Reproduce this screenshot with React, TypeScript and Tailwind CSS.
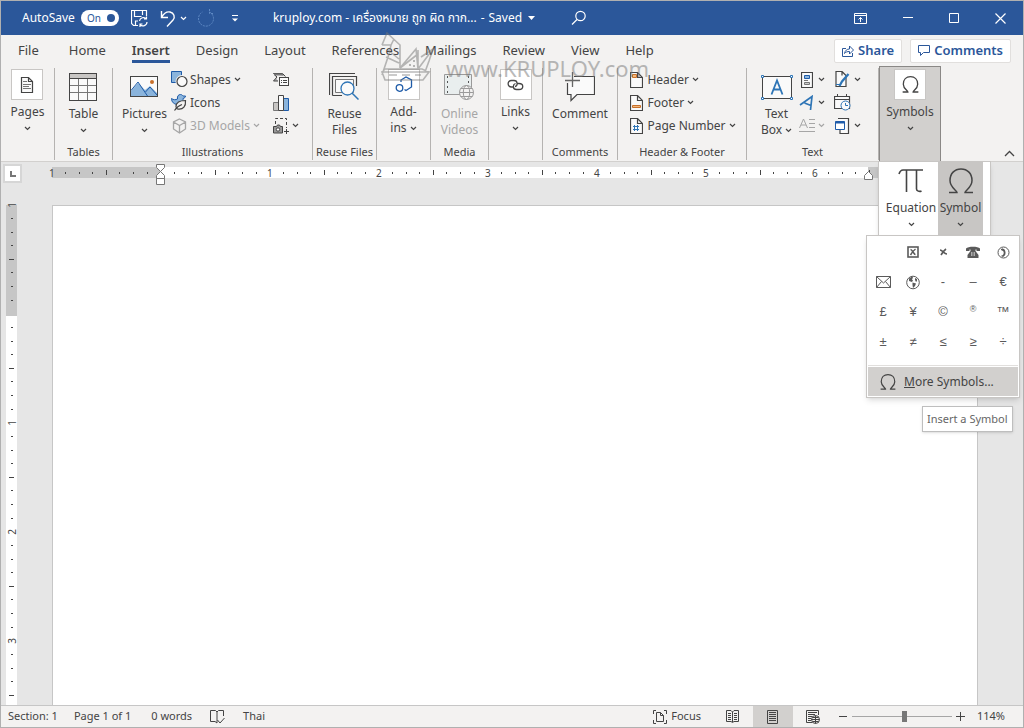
import type { ReactNode } from "react";

const tabs = ["File", "Home", "Insert", "Design", "Layout", "References", "Mailings", "Review", "View", "Help"];

const symbols: { name: string; glyph: ReactNode }[] = [
  { name: "Blank", glyph: "" },
  { name: "Boxed cross", glyph: <BoxedCrossIcon /> },
  { name: "Small cross", glyph: <SmallCrossIcon /> },
  { name: "Telephone", glyph: <PhoneIcon /> },
  { name: "Telephone location", glyph: <HandsetIcon /> },
  { name: "Envelope", glyph: <EnvelopeIcon /> },
  { name: "Globe", glyph: <GlobeIcon /> },
  { name: "Hyphen", glyph: "-" },
  { name: "Dash", glyph: "–" },
  { name: "Euro", glyph: "€" },
  { name: "Pound", glyph: "£" },
  { name: "Yen", glyph: "¥" },
  { name: "Copyright", glyph: "©" },
  { name: "Registered", glyph: <span className="mb-1 text-[9px]">®</span> },
  { name: "Trademark", glyph: "™" },
  { name: "Plus minus", glyph: "±" },
  { name: "Not equal", glyph: "≠" },
  { name: "Less or equal", glyph: "≤" },
  { name: "Greater or equal", glyph: "≥" },
  { name: "Division", glyph: "÷" },
];

function Svg({ w, h, children, className = "" }: { w: number; h: number; children: ReactNode; className?: string }) {
  return (
    <svg
      width={w}
      height={h}
      viewBox={`0 0 ${w} ${h}`}
      fill="none"
      stroke="currentColor"
      strokeWidth="1"
      className={`shrink-0 ${className}`}
      aria-hidden="true"
    >
      {children}
    </svg>
  );
}

function Chevron() {
  return (
    <Svg w={7} h={5}>
      <path d="M1 1l2.5 2.5L6 1" strokeWidth="1.2" />
    </Svg>
  );
}

/* symbol menu glyphs */

function BoxedCrossIcon() {
  return (
    <Svg w={12} h={12}>
      <rect x="1" y="1" width="10" height="10" strokeWidth="1.6" />
      <path d="M3.5 3.5c2 0 3 5 5 5M8.5 3c-1.5 1-3.5 3.5-5 6" strokeWidth="1.5" />
    </Svg>
  );
}

function SmallCrossIcon() {
  return (
    <Svg w={9} h={8}>
      <path d="M1 2c2.5 0 4 4 7 4M7 1C5 2.5 3.5 4.5 2 7" strokeWidth="1.6" />
    </Svg>
  );
}

function PhoneIcon() {
  return (
    <Svg w={14} h={12}>
      <path
        d="M0 4V2.5C2 .3 12 .3 14 2.5V5h-3.5V3.5h-1V5l3 4v3H1.5V9l3-4V3.5h-1V5H0z"
        fill="currentColor"
        stroke="none"
      />
      <path d="M5 7h4M5 9h4" stroke="#fff" strokeDasharray="1 .5" />
    </Svg>
  );
}

function HandsetIcon() {
  return (
    <Svg w={13} h={13}>
      <circle cx="6.5" cy="6.5" r="5.5" />
      <path d="M5 3.5c3 0 3.5 5 1 6.5" strokeWidth="1.8" />
      <path d="M4 3.5h2M4.5 10h2" strokeWidth="1.5" />
    </Svg>
  );
}

function EnvelopeIcon() {
  return (
    <Svg w={15} h={12}>
      <path d="M.5.5h14v11H.5zM.5.5L7.5 7l7-6.5M.5 11.5l5-6M14.5 11.5l-5-6" />
    </Svg>
  );
}

function GlobeIcon() {
  return (
    <Svg w={14} h={15}>
      <circle cx="7" cy="7.5" r="6.3" />
      <path d="M3 3.500l3-2 1 1-1 2 1 1-1 1.500-3-1zM9 3l2 1v2l-1 1-1-2zM6.500 7.500l3.500 1-1 2.500-2 2-.5-3z" fill="currentColor" stroke="none" />
    </Svg>
  );
}

/* ribbon icons */

function PageIcon() {
  return (
    <Svg w={14} h={18}>
      <path d="M1.500 1.500h7l4 4v11h-11zM8.500 1.500v4h4" fill="#fafafa" strokeWidth="1.2" />
      <path d="M3 5.500h4M3 8.500h8M3 10.500h6M3 12.500h8" stroke="#777" />
    </Svg>
  );
}

function TableIcon() {
  return (
    <Svg w={28} h={28}>
      <rect x=".5" y=".5" width="27" height="27" fill="#fafafa" />
      <path d="M1 1h26v4H1z" fill="#c8c6c4" stroke="none" />
      <path d="M1 12.500h26M1 19.500h26M9.500 5v22M18.500 5v22" stroke="#777" />
      <path d="M.5.5h27v27H.5zM.5 5.500h27" />
    </Svg>
  );
}

function PicturesIcon() {
  return (
    <Svg w={28} h={22}>
      <rect x=".5" y=".5" width="27" height="20" fill="#fafafa" />
      <path d="M1 15l7-8 7 7 5-4 7 7v4H1z" fill="#8ab4dc" stroke="none" />
      <path d="M1 14.500l7-8.500 9.500 14M15.500 16l4.500-5 7 8" stroke="#1e5ba8" />
      <circle cx="22" cy="6" r="2" fill="#c8702a" stroke="none" />
      <path d="M.5.5h27v20H.5z" />
    </Svg>
  );
}

function ShapesIcon() {
  return (
    <Svg w={17} h={17}>
      <path d="M.5.5h10v11H.5z" fill="#8ab4dc" stroke="#1e5ba8" />
      <circle cx="11" cy="10.500" r="5" fill="#fafafa" stroke="#f3f2f1" strokeWidth="3" />
      <circle cx="11" cy="10.500" r="5" fill="#fafafa" strokeWidth="1.2" />
    </Svg>
  );
}

function DuckIcon() {
  return (
    <Svg w={17} h={17}>
      <path d="M.5 4.500c2 1.500 4 1.500 6 .5C6 2 7.500.5 9.500.5c1.500 0 2 1 2.500 1.500h2.500c0 1.500-1 2-2.500 2.500.5 3-1 6-5 6C3 10.500.5 8 .5 4.500z" fill="#8ab4dc" stroke="#1e5ba8" />
      <path d="M14.500 6.500c-6 0-9.500 2-9.500 6 0 1 .5 2 1.500 2.500 6 1 8.500-3 8-8.500z" fill="#f3f2f1" strokeWidth="1.2" />
      <path d="M3.500 16.500c2-3 4.500-5 7.500-6" strokeWidth="1.2" />
    </Svg>
  );
}

function CubeIcon() {
  return (
    <Svg w={15} h={16}>
      <path d="M7.500 1l6 3v7l-6 4-6-4V4zM1.500 4l6 3.500 6-3.500M7.500 7.500V15" strokeWidth="1.3" />
    </Svg>
  );
}

function SmartArtIcon() {
  return (
    <Svg w={16} h={13}>
      <path d="M.5.5h9l3 3M.5.5L4 4 .5 8H5" fill="#b5b5b5" />
      <path d="M1 1.500h9" stroke="#777" strokeWidth="2" />
      <rect x="6.500" y="4.500" width="9" height="8" fill="#fafafa" />
      <path d="M8 7.500h1M10 7.500h4M8 9.500h1M10 9.500h4" />
    </Svg>
  );
}

function ChartIcon() {
  return (
    <Svg w={16} h={16}>
      <path d="M.5 7.500h5v8h-5z" fill="#c8c6c4" stroke="#777" />
      <path d="M10.500 3.500h5v12h-5z" fill="#8ab4dc" stroke="#1e5ba8" />
      <path d="M5.500.5h5v15h-5z" fill="#fafafa" />
    </Svg>
  );
}

function ScreenshotIcon() {
  return (
    <Svg w={16} h={16}>
      <path d="M2.500 6V.5h11V10" strokeDasharray="3 2" />
      <path d="M.5 8.500h3l1-1.500h2l1 1.500h2v6.500h-9z" fill="#999" />
      <circle cx="5" cy="11.500" r="1.7" fill="#fff" />
      <path d="M11 13.500h5M13.500 11v5" />
    </Svg>
  );
}

function ReuseIcon() {
  return (
    <Svg w={30} h={28}>
      <path d="M.5 22V.5H26M3.500 22.500v-19h24V13M3.500 22.500H13" strokeWidth="1.2" />
      <path d="M6.500 6.500h18v13h-18z" fill="#fafafa" stroke="#777" />
      <circle cx="18.500" cy="15.500" r="6.500" fill="#fafafa" stroke="#2e75b6" strokeWidth="1.3" />
      <path d="M23 20l6.500 6.500" stroke="#2e75b6" strokeWidth="1.5" />
    </Svg>
  );
}

function AddinsIcon() {
  return (
    <Svg w={18} h={17} className="text-[#1e5ba8]">
      <path d="M6 6V4l5-3 5.500 3v7L11 14.500 9.500 13.500" strokeWidth="1.3" />
      <circle cx="4.500" cy="12" r="3.300" strokeWidth="1.3" />
    </Svg>
  );
}

function VideoIcon() {
  return (
    <Svg w={30} h={26} className="text-[#9a9a9a]">
      <path d="M.5.5h27v20H.5z" fill="#e9eeee" />
      <path d="M3.500 2v18M24.500 2v10" stroke="#555" strokeDasharray="2 3" />
      <circle cx="22.500" cy="18.500" r="7" fill="#f3f2f1" />
      <ellipse cx="22.500" cy="18.500" rx="3.200" ry="7" />
      <path d="M15.500 18.500h14M16.500 14.500h12M16.500 22.500h12" />
    </Svg>
  );
}

function LinkIcon() {
  return (
    <Svg w={17} h={12}>
      <path
        d="M7 8H4.500C0 8 0 1.500 4.500 1.500h2.500c4 0 4 5.500 1 6M9.500 4.500H12c5 0 5 6 0 6H9.500c-4 0-4-5-1-6"
        strokeWidth="1.3"
      />
    </Svg>
  );
}

function CommentIcon() {
  return (
    <Svg w={30} h={30}>
      <path d="M2.500 4.500h27v18H12l-6 6v-6H2.500z" fill="#fafafa" strokeWidth="1.2" />
      <path d="M0 0h9v11H0z" fill="#f3f2f1" stroke="none" />
      <path d="M7.500 0v15M0 8.500h15" stroke="#666" strokeWidth="1.3" />
    </Svg>
  );
}

function DocIcon({ kind }: { kind: "header" | "footer" | "number" }) {
  return (
    <Svg w={13} h={16}>
      <path d="M.5.5h7l5 5v10H.5zM7.500.5v5h5" fill="#fafafa" strokeWidth="1.2" />
      {kind === "header" && <path d="M2.500 2.500h4v3h-4z" fill="#f4b77c" stroke="#c8702a" />}
      {kind === "footer" && <path d="M2.500 10.500h8v2h-8z" fill="#f4b77c" stroke="#c8702a" />}
      {kind === "number" && <path d="M4.500 7v6M7.500 7v6M3 8.500h6M3 11.500h6" stroke="#2e75b6" />}
    </Svg>
  );
}

function TextBoxIcon() {
  return (
    <Svg w={32} h={27}>
      <path d="M1.500 2.500h29v22h-29z" fill="#fafafa" />
      <path d="M10.500 20.500L16 6.500l5.500 14M12.500 15.500h7" stroke="#2e75b6" strokeWidth="1.8" />
      <path d="M.5 1.500h2v2h-2zM29.500 1.500h2v2h-2zM.5 23.500h2v2h-2zM29.500 23.500h2v2h-2z" fill="#fff" stroke="#2e75b6" />
    </Svg>
  );
}

function QuickPartsIcon() {
  return (
    <Svg w={12} h={16}>
      <path d="M.5.5h11v15H.5z" fill="#fafafa" strokeWidth="1.2" />
      <path d="M3.500 3.500h5v3h-5z" fill="#8ab4dc" stroke="#1e5ba8" />
      <path d="M3 8.500h4" stroke="#777" />
      <path d="M3.500 10.500h5v2h-5z" fill="#ccc" stroke="#777" />
    </Svg>
  );
}

function WordArtIcon() {
  return (
    <Svg w={16} h={16} className="text-[#2e75b6]">
      <path d="M1 10L13 1.500 11.500 15M5.500 8l6.500 2.500" strokeWidth="1.7" />
    </Svg>
  );
}

function DropCapIcon() {
  return (
    <Svg w={16} h={15} className="text-[#a6a6a6]">
      <path d="M.5 10L4.500 1l4 9M2 7h5M10 1.500h6M10 5.500h6M10 9.500h6M0 13.500h16" />
    </Svg>
  );
}

function SignatureIcon() {
  return (
    <Svg w={15} h={17}>
      <path d="M1 .5h6l4 4v11H1zM7 .5v4" fill="#fafafa" strokeWidth="1.2" />
      <path d="M13.500 3L7 10.500 4.500 15" stroke="#2e75b6" strokeWidth="2.2" />
      <path d="M1 13.500h4" stroke="#2e75b6" />
    </Svg>
  );
}

function DateIcon() {
  return (
    <Svg w={17} h={17}>
      <path d="M.5 2.500h15v12H.5z" fill="#fafafa" strokeWidth="1.2" />
      <path d="M.5 5.500h15M3.500 0v3M12.500 0v3" />
      <circle cx="11.500" cy="11.500" r="4.500" fill="#fafafa" stroke="#2e75b6" />
      <path d="M11.500 9v2.500H14" stroke="#2e75b6" />
    </Svg>
  );
}

function ObjectIcon() {
  return (
    <Svg w={15} h={16}>
      <path d="M3 .5h10.500v15H5v-4" fill="#fafafa" strokeWidth="1.2" />
      <path d="M.5 3.500h9v8h-9z" fill="#fff" stroke="#1e5ba8" />
      <path d="M.5 4.500h9" stroke="#1e5ba8" strokeWidth="2" />
    </Svg>
  );
}

function OmegaIcon({ size }: { size: "sm" | "md" | "lg" }) {
  const px = size === "lg" ? 26 : size === "md" ? 17 : 16;
  return (
    <svg width={px} height={px} viewBox="0 0 26 26" fill="none" stroke="#444" strokeWidth={size === "lg" ? 1.5 : 2} aria-hidden="true">
      <path d="M1 24.500h8c0-2-7-5-7-12C2 5.500 6.500 1 13 1s11 4.500 11 11.500c0 7-7 10-7 12h8" />
    </svg>
  );
}

/* ribbon building blocks */

function Group({ label = "", width, children }: { label?: string; width: string; children: ReactNode }) {
  return (
    <section className={`flex shrink-0 flex-col pt-0.5 ${width}`}>
      <div className="flex h-[92px] flex-col border-r border-[#b5b3b1]">
        <div className="flex h-[78px] items-start justify-center">{children}</div>
        <h2 className="h-4 text-center text-[11px] leading-4 whitespace-nowrap">{label}</h2>
      </div>
    </section>
  );
}

function BigButton({ icon, label, second, disabled = false, arrow = false }: { icon: ReactNode; label: string; second?: string; disabled?: boolean; arrow?: boolean }) {
  return (
    <button className={`flex flex-col items-center leading-4 whitespace-nowrap ${disabled ? "text-[#a6a6a6]" : ""}`}>
      <span className="flex h-[38px] items-center">{icon}</span>
      <span>{label}</span>
      <span className="flex h-4 items-center gap-[3px]">
        {second}
        {arrow && <Chevron />}
      </span>
    </button>
  );
}

function BoxedButton({ icon, label, second }: { icon: ReactNode; label: string; second?: string }) {
  return (
    <button className="flex flex-col items-center pt-px leading-4">
      <span className="mb-1 flex h-[31px] w-8 items-center justify-center border border-[#c8c6c4] bg-white">{icon}</span>
      <span>{label}</span>
      <span className="flex h-4 items-center gap-[3px]">
        {second}
        <Chevron />
      </span>
    </button>
  );
}

function RowButton({ icon, label, disabled = false, arrow = true, title }: { icon: ReactNode; label?: string; disabled?: boolean; arrow?: boolean; title?: string }) {
  return (
    <button aria-label={title} className={`flex h-[23px] items-center gap-[3px] whitespace-nowrap ${disabled ? "text-[#a6a6a6]" : ""}`}>
      <span className="flex w-4 justify-center">{icon}</span>
      {label}
      {arrow && <Chevron />}
    </button>
  );
}

function TitleBar() {
  return (
    <header className="flex h-[34px] shrink-0 items-center bg-[#2b579a] text-white">
      <label className="flex items-center gap-1.5 pl-[21px]">
        AutoSave
        <input type="checkbox" defaultChecked className="peer sr-only" />
        <span className="flex h-4 w-[38px] items-center justify-between rounded-full bg-white pr-1 pl-1.5 text-[10px] text-[#2b579a]">
          On
          <span className="size-2 rounded-full bg-[#2b579a]" />
        </span>
      </label>
      <div className="flex items-center pl-3">
        <button aria-label="Save">
          <Svg w={17} h={17}>
            <path d="M7 15.500H2.500l-2-2V.5h15V6M3.500.5v6h7M11.500.5V5M4.500 15v-4H7" strokeWidth="1.2" />
            <path d="M8.500 11a4 4 0 017-2M15.500 6.500V9H13M16 12a4 4 0 01-7 2.500M9 17v-3h2.500" strokeWidth="1.2" />
          </Svg>
        </button>
        <button aria-label="Undo" className="ml-3 flex items-center gap-1">
          <Svg w={16} h={17}>
            <path d="M1.500 1v6.500H8M1.500 7.500C4 3 7 1.500 10 2c4 1 5.500 5 3 8l-6 6.500" strokeWidth="1.4" />
          </Svg>
          <Chevron />
        </button>
        <button aria-label="Redo" className="ml-2.5 text-[#5f8ac4]">
          <Svg w={18} h={18}>
            <path d="M12.500 3a7.500 7.500 0 11-7 0M12.500 0v4.500H17" strokeDasharray="2 1" />
          </Svg>
        </button>
        <button aria-label="Customize Quick Access" className="ml-4">
          <Svg w={8} h={8}>
            <path d="M1 1.500h6" />
            <path d="M1 4.500h6l-3 3z" fill="currentColor" stroke="none" />
          </Svg>
        </button>
      </div>
      <h1 className="flex items-center gap-1 pl-[34px] whitespace-nowrap">
        <span>kruploy.com - เครื่องหมาย ถูก ผิด กาก...</span>
        <button className="flex items-center gap-1">
          <span>-</span>
          <span>Saved</span>
          <Svg w={7} h={4} className="ml-0.5">
            <path d="M0 0h7L3.500 4z" fill="currentColor" stroke="none" />
          </Svg>
        </button>
      </h1>
      <button aria-label="Search" className="ml-9">
        <Svg w={16} h={16}>
          <circle cx="9.500" cy="6" r="4.700" strokeWidth="1.2" />
          <path d="M6 9.500L1 14.500" strokeWidth="1.3" />
        </Svg>
      </button>
      <div className="ml-auto flex items-center gap-9 pr-[17px]">
        <button aria-label="Ribbon Display Options">
          <Svg w={13} h={11}>
            <path d="M.5.5h12v10H.5zM.5 2.500h12M6.500 9V4.500M4.500 6.500l2-2 2 2" />
          </Svg>
        </button>
        <button aria-label="Minimize">
          <Svg w={10} h={10}>
            <path d="M0 4.500h10" />
          </Svg>
        </button>
        <button aria-label="Maximize">
          <Svg w={10} h={10}>
            <path d="M.5.5h9v9h-9z" />
          </Svg>
        </button>
        <button aria-label="Close">
          <Svg w={11} h={11}>
            <path d="M.5.5l10 10M10.500.5l-10 10" strokeWidth="1.2" />
          </Svg>
        </button>
      </div>
    </header>
  );
}

function TabBar() {
  return (
    <nav className="flex h-[31px] shrink-0 items-center pr-3 pl-[17px] text-[13px]">
      <div className="flex gap-[26px] pt-0.5">
        {tabs.map((tab) => (
          <a
            key={tab}
            href="#"
            className={`border-b-3 leading-5 ${tab === "Insert" ? "border-[#2b579a] font-semibold" : "border-transparent"} ${tab === "File" ? "mr-1" : ""}`}
          >
            {tab}
          </a>
        ))}
      </div>
      <div className="ml-auto flex gap-2 font-semibold text-[#2b579a]">
        <button className="flex h-6 items-center gap-1 rounded-xs border border-[#e1dfdd] bg-white px-[7px]">
          <Svg w={12} h={12}>
            <path d="M4 3.500H.5v8h10V8M2.500 8.500c.5-3 2.500-4.500 5-4.500V1l4 4-4 4V6.500c-2 0-4 .5-5 2z" />
          </Svg>
          Share
        </button>
        <button className="flex h-6 items-center gap-1 rounded-xs border border-[#e1dfdd] bg-white px-[7px]">
          <Svg w={12} h={11}>
            <path d="M.5.5h11v7H5.500l-3 3v-3h-2z" />
          </Svg>
          Comments
        </button>
      </div>
    </nav>
  );
}

function SymbolsGroup() {
  return (
    <section className="relative z-10 w-[62px] shrink-0 border border-b-0 border-[#8a8886] bg-[#d2d0ce]">
      <button className="flex w-full flex-col items-center pt-0.5 leading-4">
        <span className="mb-1 flex h-[31px] w-8 items-center justify-center border border-[#c8c6c4] bg-white">
          <OmegaIcon size="md" />
        </span>
        Symbols
        <span className="flex h-4 items-center">
          <Chevron />
        </span>
      </button>

      <div className="absolute top-[94px] -left-0.5 flex h-[76px] w-[113px] border border-[#c8c6c4] bg-white pl-[5px] shadow-md">
        <button className="flex w-[54px] flex-col items-center pt-1.5 leading-4">
          <Svg w={26} h={26} className="mb-1.5">
            <path d="M1 6c1-3 2-4 4-4h20M8.500 2v22M18.500 2v19c0 2 3 3 5 2" strokeWidth="1.6" stroke="#444" />
          </Svg>
          Equation
          <span className="flex h-4 items-center">
            <Chevron />
          </span>
        </button>
        <button className="flex w-[45px] flex-col items-center bg-[#c8c6c4] pt-1.5 leading-4">
          <span className="mb-1.5">
            <OmegaIcon size="lg" />
          </span>
          Symbol
          <span className="flex h-4 items-center">
            <Chevron />
          </span>
        </button>
      </div>

      <div className="absolute top-[168px] -left-3.5 w-[154px] border border-[#c8c6c4] bg-white p-px shadow-md">
        <div className="grid grid-cols-5 font-['Liberation_Sans',sans-serif] text-[13px] text-[#5a5a5a]">
          {symbols.map((s) => (
            <button key={s.name} aria-label={s.name} className="flex h-[30px] items-center justify-center">
              {s.glyph}
            </button>
          ))}
        </div>
        <div className="mt-2 border-t border-[#e1dfdd] pt-px">
          <button className="flex h-[29px] w-full items-center gap-2 bg-[#d2d0ce] pl-3">
            <OmegaIcon size="sm" />
            <span>
              <u>M</u>ore Symbols...
            </span>
          </button>
        </div>
      </div>

      <div
        role="tooltip"
        className="absolute top-[339px] left-[42px] border border-[#bebebe] bg-white px-1 text-[11px] leading-6 whitespace-nowrap text-[#666] shadow-sm"
      >
        Insert a Symbol
      </div>
    </section>
  );
}

function Ribbon() {
  return (
    <div className="flex h-[95px] shrink-0">
      <Group width="w-[54px]">
        <BoxedButton icon={<PageIcon />} label="Pages" />
      </Group>
      <Group width="w-[58px]" label="Tables">
        <BigButton icon={<TableIcon />} label="Table" arrow />
      </Group>
      <Group width="w-[200px]" label="Illustrations">
        <BigButton icon={<PicturesIcon />} label="Pictures" arrow />
        <div className="ml-1 w-[94px]">
          <RowButton icon={<ShapesIcon />} label="Shapes" />
          <RowButton icon={<DuckIcon />} label="Icons" arrow={false} />
          <RowButton icon={<CubeIcon />} label="3D Models" disabled />
        </div>
        <div className="ml-2 pr-1">
          <RowButton icon={<SmartArtIcon />} title="SmartArt" arrow={false} />
          <RowButton icon={<ChartIcon />} title="Chart" arrow={false} />
          <RowButton icon={<ScreenshotIcon />} title="Screenshot" />
        </div>
      </Group>
      <Group width="w-[64px]" label="Reuse Files">
        <BigButton icon={<ReuseIcon />} label="Reuse" second="Files" />
      </Group>
      <Group width="w-[54px]">
        <BoxedButton icon={<AddinsIcon />} label="Add-" second="ins" />
      </Group>
      <Group width="w-[58px]" label="Media">
        <BigButton icon={<VideoIcon />} label="Online" second="Videos" disabled />
      </Group>
      <Group width="w-[54px]">
        <BoxedButton icon={<LinkIcon />} label="Links" />
      </Group>
      <Group width="w-[75px]" label="Comments">
        <BigButton icon={<CommentIcon />} label="Comment" />
      </Group>
      <Group width="w-[129px]" label="Header & Footer">
        <div>
          <RowButton icon={<DocIcon kind="header" />} label="Header" />
          <RowButton icon={<DocIcon kind="footer" />} label="Footer" />
          <RowButton icon={<DocIcon kind="number" />} label="Page Number" />
        </div>
      </Group>
      <Group width="w-[132px]" label="Text">
        <BigButton icon={<TextBoxIcon />} label="Text" second="Box" arrow />
        <div className="ml-1.5">
          <RowButton icon={<QuickPartsIcon />} title="Quick Parts" />
          <RowButton icon={<WordArtIcon />} title="WordArt" />
          <RowButton icon={<DropCapIcon />} title="Drop Cap" disabled />
        </div>
        <div className="ml-2.5 pr-1">
          <RowButton icon={<SignatureIcon />} title="Signature Line" />
          <RowButton icon={<DateIcon />} title="Date and Time" arrow={false} />
          <RowButton icon={<ObjectIcon />} title="Object" />
        </div>
      </Group>
      <SymbolsGroup />
      <button aria-label="Collapse the Ribbon" className="mt-auto mr-2 mb-1 ml-auto">
        <Svg w={11} h={7}>
          <path d="M1 6l4.500-4.500L10 6" strokeWidth="1.3" />
        </Svg>
      </button>
    </div>
  );
}

const eighths = [0, 1, 2, 3, 4, 5, 6, 7];

function Inch({ label, vertical = false }: { label: string; vertical?: boolean }) {
  return (
    <div className={`flex shrink-0 ${vertical ? "h-[109px] flex-col" : "w-[109px]"}`}>
      {eighths.map((n) => (
        <span key={n} className="flex flex-1 items-center justify-center text-[10px] leading-none">
          {n === 0 && <span className={vertical ? "-rotate-90" : ""}>{label}</span>}
          {n === 4 && <span className={`bg-[#444] ${vertical ? "h-px w-[5px]" : "h-[5px] w-px"}`} />}
          {n !== 0 && n !== 4 && <span className={`bg-[#444] ${vertical ? "h-px w-0.5" : "h-0.5 w-px"}`} />}
        </span>
      ))}
    </div>
  );
}

function Ruler() {
  return (
    <div className="flex h-[43px] shrink-0 items-start">
      <button aria-label="Tab selector" className="mt-0.5 ml-0.5 flex size-[19px] shrink-0 items-center justify-center border-2 border-[#d6d6d6] bg-white">
        <span className="size-1.5 border-b-2 border-l-2 border-[#777]" />
      </button>
      <div className="relative mt-[5px] ml-[23px] grid h-[11px] min-w-0 flex-1">
        <div className="col-start-1 row-start-1 ml-[7px] flex">
          <div className="w-[108px] bg-[#c6c6c6]" />
          <div className="w-[708px] bg-white" />
          <div className="w-[109px] bg-[#c6c6c6]" />
        </div>
        <div className="col-start-1 row-start-1 flex overflow-hidden">
          {["1", "", "1", "2", "3", "4", "5", "6"].map((label, i) => (
            <Inch key={i} label={label} />
          ))}
        </div>
        <Svg w={9} h={22} className="absolute -top-[3px] left-[111px] text-[#777]">
          <path d="M.5.5h8v3l-4 4-4-4zM.5 14.500v-3l4-4 4 4v3zM.5 14.500h8v6h-8z" fill="#fff" />
        </Svg>
        <Svg w={9} h={9} className="absolute top-1 left-[819px] text-[#777]">
          <path d="M.5 8.500v-4l4-4 4 4v4z" fill="#fff" />
        </Svg>
      </div>
    </div>
  );
}

function Workspace() {
  return (
    <main className="flex min-h-0 flex-1 flex-col overflow-hidden border-t border-[#d2d0ce] bg-[#e6e6e6]">
      <Ruler />
      <div className="flex min-h-0 flex-1">
        <div className="ml-[5px] grid w-[11px] shrink-0">
          <div className="col-start-1 row-start-1 bg-white">
            <div className="h-[111px] bg-[#c6c6c6]" />
          </div>
          <div className="col-start-1 row-start-1 -mt-[7px] h-0">
            {["1", "", "1", "2", "3"].map((label, i) => (
              <Inch key={i} label={label} vertical />
            ))}
          </div>
        </div>
        <div className="mr-[45px] ml-[35px] flex-1 border border-b-0 border-[#c6c6c6] bg-white" />
      </div>
    </main>
  );
}

function StatusBar() {
  return (
    <footer className="z-10 flex h-[22px] shrink-0 items-stretch border-t border-[#c6c6c6] bg-[#f3f2f1] text-[11px]">
      <div className="flex items-center gap-4 pl-[7px]">
        <span>Section: 1</span>
        <span>Page 1 of 1</span>
        <span className="ml-1">0 words</span>
        <button aria-label="Proofing" className="mr-0.5 ml-0.5">
          <Svg w={15} h={14}>
            <path d="M7 2L5.500.5h-5v11H5L7 13V2l1.500-1.500h5V6M7.500 10l2.500 3 4.500-5" />
          </Svg>
        </button>
        <span>Thai</span>
      </div>
      <div className="ml-auto flex items-center">
        <button className="mr-3 flex items-center gap-1">
          <Svg w={14} h={14}>
            <path d="M3 .5H.5V4M.5 10v3.500H3M11 .5h2.500V4M13.500 10v3.500H11M3.500 2.500h4l3 3v6h-7zM7.500 2.500v3h3" />
          </Svg>
          Focus
        </button>
        <button aria-label="Read Mode" className="flex h-full w-10 items-center justify-center">
          <Svg w={13} h={13}>
            <path d="M6.500 2L5 .5H.5v11H5l1.500 1 1.500-1h4.500V.5H8zM6.500 2v10M2 3.500h3M2 5.500h3M2 7.500h3M2 9.500h3M8 3.500h3M8 5.500h3M8 7.500h3M8 9.500h3" />
          </Svg>
        </button>
        <button aria-label="Print Layout" className="flex h-full w-10 items-center justify-center bg-[#d2d0ce]">
          <Svg w={11} h={14}>
            <path d="M.5.5h10v13H.5zM2 2.500h7M2 4.500h7M2 6.500h7M2 8.500h7M2 10.500h7" />
          </Svg>
        </button>
        <button aria-label="Web Layout" className="flex h-full w-10 items-center justify-center">
          <Svg w={14} h={14}>
            <path d="M6 12.500H.5V.5h12V5M2 2.500h9M2 4.500h7M2 6.500h4M2 8.500h3M2 10.500h3" />
            <circle cx="9.500" cy="9.500" r="4" fill="#f3f2f1" />
            <path d="M5.500 9.500h8M9.500 5.500v8M6.500 7.500h6M6.500 11.500h6" />
          </Svg>
        </button>
        <button aria-label="Zoom Out" className="ml-1.5">
          <Svg w={9} h={9}>
            <path d="M0 4.500h8" />
          </Svg>
        </button>
        <input
          type="range"
          aria-label="Zoom"
          min={0}
          max={100}
          defaultValue={53}
          className="mx-1 h-3 w-[100px] appearance-none bg-[linear-gradient(#a6a6a6,#a6a6a6)] bg-size-[100%_1px] bg-center bg-no-repeat [&::-webkit-slider-thumb]:h-[11px] [&::-webkit-slider-thumb]:w-[5px] [&::-webkit-slider-thumb]:appearance-none [&::-webkit-slider-thumb]:bg-[#777]"
        />
        <button aria-label="Zoom In">
          <Svg w={9} h={9}>
            <path d="M0 4.500h9M4.500 0v9" />
          </Svg>
        </button>
        <span className="mr-[18px] ml-3">114%</span>
      </div>
    </footer>
  );
}

function Watermark() {
  return (
    <div className="pointer-events-none absolute top-[31px] left-[375px] z-20 flex text-[#777] opacity-50">
      <Svg w={60} h={50}>
        <path
          d="M6 13L11 1l13 12v23M6 13h9l3-6M15 13l-2 9-7 21M12 18l11 9M10 25l13 6M24 36L40 17l2 20M42 18v19M24 36l18-14M42 37l15-20-12 8M57 17l-4 12-4 11M6 40h47l-6 8H9zM6 40l3-3h37l7 3M13 43h8M26 43h8M39 43h6"
          strokeWidth="1.6"
        />
        <path d="M33 33h2M37 29h2M37 34h2" strokeWidth="2" />
      </Svg>
      <span className="ml-2.5 pt-6 text-[22px] leading-6">www.KRUPLOY.com</span>
    </div>
  );
}

export default function App() {
  return (
    <div className="relative flex h-screen flex-col overflow-hidden border border-[#b0b0b0] bg-[#f3f2f1] font-['Noto_Sans','Noto_Sans_Thai',sans-serif] text-[12px] text-[#444]">
      <TitleBar />
      <TabBar />
      <Ribbon />
      <Workspace />
      <StatusBar />
      <Watermark />
    </div>
  );
}
